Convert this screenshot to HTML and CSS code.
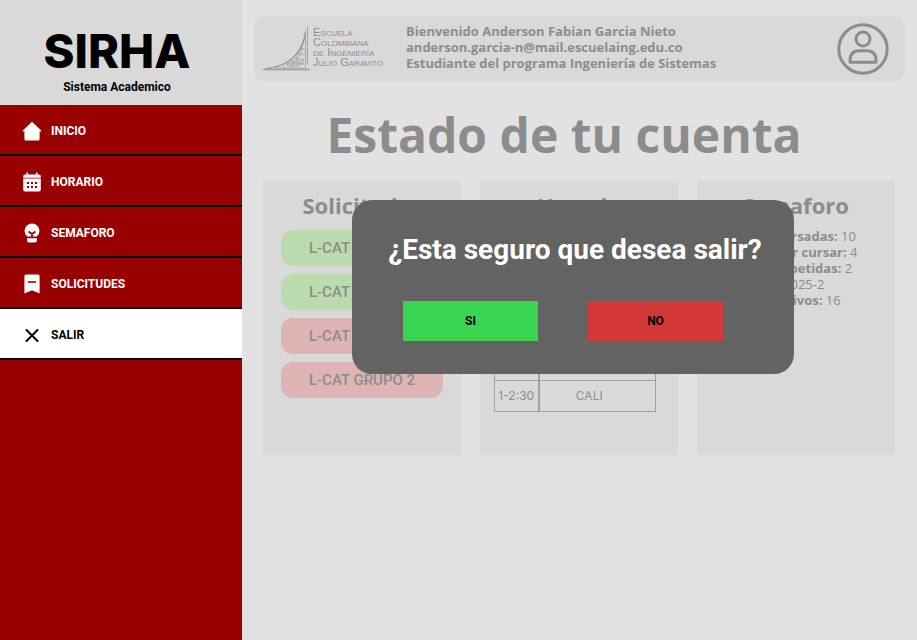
FILE: index.html
```html
<!DOCTYPE html>
<html lang="es">
<head>
<meta charset="utf-8">
<meta name="viewport" content="width=device-width, initial-scale=1">
<title>SIRHA</title>
<link rel="stylesheet" href="styles.css">
</head>
<body>
<div class="app">
  <aside class="sidebar">
    <div class="brand">
      <p class="brand-name">SIRHA</p>
      <p class="brand-sub">Sistema Academico</p>
    </div>
    <nav class="nav">
      <a class="nav-item" href="#inicio">
        <svg class="nav-icon" viewBox="0 0 20 20" fill="currentColor" aria-hidden="true"><path d="M10 .8 19.2 9.6Q19.6 10.6 18.6 10.6H17.6V18Q17.6 19.4 16.200 19.400H3.800Q2.400 19.400 2.400 18V10.600H1.400Q.4 10.600.8 9.600Z"/></svg>
        <span>INICIO</span>
      </a>
      <a class="nav-item" href="#horario">
        <svg class="nav-icon" viewBox="0 0 20 20" aria-hidden="true"><path fill="currentColor" d="M4.500 .5H6V2.500H14V.5H15.500V2.500H17Q18.800 2.500 18.800 4.300V5.700H1.200V4.300Q1.200 2.500 3 2.500H4.500ZM1.200 6.400H18.800V17.700Q18.800 19.500 17 19.500H3Q1.200 19.500 1.200 17.700Z"/><path fill="#990000" d="M5 10h2v2H5zM9 10h2v2H9zM13 10h2v2h-2zM5 14h2v2H5zM9 14h2v2H9zM13 14h2v2h-2z"/></svg>
        <span>HORARIO</span>
      </a>
      <a class="nav-item" href="#semaforo">
        <svg class="nav-icon" viewBox="0 0 20 20" aria-hidden="true"><path fill="currentColor" d="M10 .5A7.500 7.500 0 0 1 17.500 8Q17.500 11 14.800 13.500H5.200Q2.500 11 2.500 8A7.500 7.500 0 0 1 10 .5ZM5 15.300H15V17Q15 19.500 12.800 19.500H7.200Q5 19.500 5 17Z"/><path fill="none" stroke="#990000" stroke-width="1.700" d="M6.500 8.500 10 11 13.500 8.500M10 11V14"/></svg>
        <span>SEMAFORO</span>
      </a>
      <a class="nav-item" href="#solicitudes">
        <svg class="nav-icon" viewBox="0 0 20 20" aria-hidden="true"><path fill="currentColor" d="M4 .5H16Q17.600 .5 17.600 2V19.500L10 16.200 2.400 19.500V2Q2.400 .5 4 .5Z"/><path stroke="#990000" stroke-width="1.600" d="M6 8H14"/></svg>
        <span>SOLICITUDES</span>
      </a>
      <a class="nav-item nav-item-active" href="#salir" aria-current="page">
        <svg class="nav-icon" viewBox="0 0 20 20" fill="none" stroke="currentColor" stroke-width="2" stroke-linecap="round" aria-hidden="true"><path d="M4.500 5 15.500 16M15.500 5 4.500 16"/></svg>
        <span>SALIR</span>
      </a>
    </nav>
  </aside>

  <main class="main">
    <header class="topbar">
      <div class="school">
        <svg class="school-mark" viewBox="0 0 48 44" aria-hidden="true">
          <path d="M0 42.500H47" stroke="#a19d9b" stroke-width="1.500"/>
          <path d="M44.500 0V37" stroke="#a19d9b"/>
          <path d="M2 41.500C22 40 39 29 42.500 4C42 23 29 37 9 41Z" fill="#8f8b89" stroke="#8f8b89" stroke-width=".6"/>
          <path d="M42.500 6V41H12M39 19V24L36 28 42 27M36 24V31L31 32 30 36H40V31M33 28 34 35 27 34 24 39H36V34M28 32 29 40M20 37 21 41M42 22H38M42 33H34M41 37H23" fill="none" stroke="#a19d9b" stroke-width=".8"/>
        </svg>
        <p class="school-name">Escuela<br>Colombiana<br>de Ingeniería<br>Julio Garavito</p>
      </div>
      <p class="welcome">Bienvenido Anderson Fabian Garcia Nieto<br>anderson.garcia-n@mail.escuelaing.edu.co<br>Estudiante del programa Ingeniería de Sistemas</p>
      <svg class="avatar" viewBox="0 0 52 52" fill="none" stroke="currentColor" stroke-width="3" role="img" aria-label="Perfil">
        <circle cx="26" cy="26" r="24.200"/><circle cx="26" cy="16" r="7"/>
        <path d="M13 39.200V37.500Q13 27.700 22.500 27.700H29.500Q39 27.700 39 37.500V39.200Z" stroke-linejoin="round"/>
      </svg>
    </header>

    <h1 class="title">Estado de tu cuenta</h1>

    <div class="cards">
      <section class="card">
        <h2 class="card-title">Solicitudes</h2>
        <ul class="requests">
          <li class="request request-ok">L-CAT GRUPO 2</li>
          <li class="request request-ok">L-CAT GRUPO 2</li>
          <li class="request request-no">L-CAT GRUPO 2</li>
          <li class="request request-no">L-CAT GRUPO 2</li>
        </ul>
      </section>
      <section class="card">
        <h2 class="card-title">Horario</h2>
        <table class="schedule">
          <tbody>
            <tr><th scope="row"></th><td></td></tr>
            <tr><th scope="row"></th><td></td></tr>
            <tr><th scope="row"></th><td></td></tr>
            <tr><th scope="row"></th><td></td></tr>
            <tr><th scope="row">1-2:30</th><td>CALI</td></tr>
          </tbody>
        </table>
      </section>
      <section class="card">
        <h2 class="card-title">Semaforo</h2>
        <ul class="stats">
          <li><b>Materias cursadas:</b> 10</li>
          <li><b>Materias por cursar:</b> 4</li>
          <li><b>Materias repetidas:</b> 2</li>
          <li><b>Semestre:</b> 2025-2</li>
          <li><b>Creditos activos:</b> 16</li>
        </ul>
      </section>
    </div>

    <div class="overlay">
      <div class="modal" role="dialog" aria-modal="true" aria-labelledby="modal-title">
        <h2 class="modal-title" id="modal-title">¿Esta seguro que desea salir?</h2>
        <div class="modal-actions">
          <button class="btn btn-yes" type="button">SI</button>
          <button class="btn btn-no" type="button">NO</button>
        </div>
      </div>
    </div>
  </main>
</div>
</body>
</html>
```
FILE: styles.css
```css
* { box-sizing: border-box; }

body, h1, h2, p, ul { margin: 0; padding: 0; }

ul { list-style: none; }

body {
  background: #e2e2e2;
  color: #8c8c8c;
  font-family: "Open Sans", "Noto Sans", sans-serif;
}

.app {
  display: grid;
  grid-template-columns: 242px 1fr;
  min-height: 100vh;
}

.sidebar {
  background: #990000;
  font-family: Roboto, sans-serif;
}

.brand {
  height: 105px;
  padding: 24px 8px 0 0;
  background: #d9d9d9;
  color: #000;
  text-align: center;
}

.brand-name {
  font: 800 47px/54px Inter, sans-serif;
}

.brand-sub {
  font-size: 12px;
  font-weight: 700;
  line-height: 18px;
}

.nav-item {
  display: flex;
  align-items: center;
  gap: 9px;
  height: 51px;
  padding: 2px 0 0 22px;
  border-bottom: 2px solid #000;
  color: #fff;
  font-size: 12px;
  font-weight: 700;
  text-decoration: none;
}

.nav-item-active {
  background: #fff;
  color: #000;
}

.nav-icon {
  width: 20px;
  height: 20px;
}

.main {
  position: relative;
  padding: 16px 12px;
}

.topbar {
  display: flex;
  align-items: center;
  height: 66px;
  padding: 0 16px 0 9px;
  background: #d9d9d9;
  border-radius: 12px;
}

.school {
  display: flex;
  gap: 2px;
  width: 143px;
}

.school-mark {
  width: 48px;
  height: 44px;
}

.school-name {
  color: #908c8a;
  font: 11px/10px "Liberation Sans", sans-serif;
  font-variant: small-caps;
  white-space: nowrap;
}

.welcome {
  padding-bottom: 4px;
  font-size: 13px;
  font-weight: 700;
  line-height: 16px;
}

.avatar {
  width: 52px;
  height: 52px;
  margin-left: auto;
}

.title {
  margin: 21px 0 15px;
  padding-right: 31px;
  font-size: 48px;
  font-weight: 700;
  line-height: 63px;
  text-align: center;
}

.cards {
  display: grid;
  grid-template-columns: repeat(3, 1fr);
  gap: 19px;
  padding: 0 10px 0 9px;
}

.card {
  min-height: 274px;
  padding: 9px 14px;
  background: #d9d9d9;
}

.card-title {
  margin-bottom: 10px;
  font-size: 22px;
  font-weight: 700;
  line-height: 30px;
  text-align: center;
}

.requests {
  display: grid;
  gap: 8px;
  padding: 0 4px;
}

.request {
  border-radius: 12px;
  font: 500 15px/36px Roboto, sans-serif;
  text-align: center;
}

.request-ok { background: #bbdaae; }

.request-no { background: #deb4b4; }

.schedule {
  width: 162px;
  margin-top: 36px;
  border-collapse: collapse;
  font: 12px/16px Inter, sans-serif;
  table-layout: fixed;
}

.schedule th,
.schedule td {
  height: 31px;
  padding: 0;
  border: 1px solid #a0a0a0;
  font-weight: 400;
  text-align: center;
}

.schedule th {
  width: 44px;
  border-right-width: 2px;
}

.schedule td { padding-right: 16px; }

.stats {
  padding-left: 4px;
  font-size: 13px;
  line-height: 16px;
  white-space: nowrap;
}

.card .stats { margin-top: -2px; }

.overlay {
  position: absolute;
  inset: 0;
  display: flex;
  align-items: flex-start;
  justify-content: center;
  padding: 200px 13px 0 0;
}

.modal {
  width: 442px;
  padding: 30px 0 33px;
  background: #636363;
  border-radius: 20px;
  color: #fff;
  font-family: Roboto, sans-serif;
}

.modal-title {
  padding-left: 4px;
  font-size: 28px;
  font-weight: 700;
  line-height: 40px;
  text-align: center;
}

.modal-actions {
  display: flex;
  gap: 50px;
  margin-top: 31px;
  padding-left: 51px;
}

.btn {
  width: 135px;
  height: 40px;
  border: 0;
  color: #000;
  font: 700 12px/16px Roboto, sans-serif;
}

.btn-yes { background: #3ad550; }

.btn-no { background: #d23838; }
```
